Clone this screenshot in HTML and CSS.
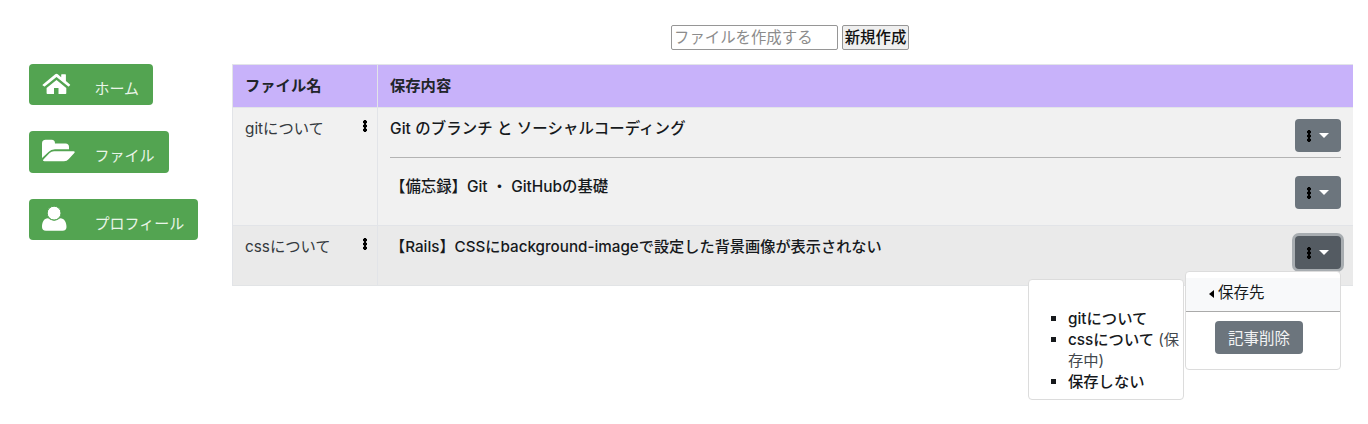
FILE: index.html
```html
<!DOCTYPE html>
<html lang="ja">
<head>
<meta charset="utf-8">
<title>ファイル</title>
<link rel="stylesheet" href="styles.css">
</head>
<body>
<div class="page">
  <nav class="sidebar">
    <a class="nav-btn home"><svg class="nav-icon" viewBox="0 0 34 28"><path d="M14.5 8 4.600 16V21.2Q4.600 22 5.400 22H12V16H16.500V22H23.500Q24.300 22 24.300 21.200V16Z"/><path d="M0.600 12.800 13.200 2.300Q14.500 1.300 15.800 2.300L19.200 5.200V2.800Q19.200 2.200 19.800 2.200H23.300Q23.900 2.200 23.900 2.800V9L28 12.500Q28.400 12.900 28 13.300L27 14.300Q26.500 14.700 26 14.300L14.500 5 3 14.300Q2.500 14.700 2 14.300L.8 13.500Q.3 13.200.6 12.800Z"/></svg><span>ホーム</span></a>
    <a class="nav-btn folder"><svg class="nav-icon" viewBox="0 0 34 28"><path d="M0 19V4.500Q0 .8 3.700.8H9.600Q13 .8 13 4.500H23.500Q27 4.500 27 8V10.300H13Q9 10.300 6.500 12.900Z"/><path d="M1.400 20.600 7.600 14Q9.300 12.200 12 12.200H31.600Q33.600 12.200 32.300 13.900L26.800 20Q24.900 22.200 22 22.200H2.500Q.3 22.200 1.400 20.600Z"/></svg><span>ファイル</span></a>
    <a class="nav-btn user"><svg class="nav-icon" viewBox="0 0 34 28"><path d="M6 11.300Q9 13.700 12.100 13.700T18.200 11.300C22.500 11.300 24.500 15.500 24.500 20Q24.500 23.700 20.500 23.700H4Q0 23.700 0 20C0 15.500 1.700 11.300 6 11.300Z"/><circle class="face" cx="12.100" cy="6.100" r="6.900"/></svg><span>プロフィール</span></a>
  </nav>
  <main class="main">
    <form class="create">
      <input class="create-input" type="text" placeholder="ファイルを作成する">
      <button class="create-btn" type="button">新規作成</button>
    </form>
    <div class="table">
      <div class="cell head">ファイル名</div>
      <div class="cell head">保存内容</div>
      <div class="cell name odd"><span>gitについて</span><i class="dots"></i></div>
      <div class="cell odd">
        <div class="article"><span class="wide first">Git のブランチ と ソーシャルコーディング</span><button class="toggle"><i class="dots"></i><i class="caret"></i></button></div>
        <div class="rule"></div>
        <div class="article second"><span class="wide">【備忘録】Git ・ GitHubの基礎</span><button class="toggle"><i class="dots"></i><i class="caret"></i></button></div>
      </div>
      <div class="cell name even"><span>cssについて</span><i class="dots"></i></div>
      <div class="cell even">
        <div class="article"><span>【Rails】CSSにbackground-imageで設定した背景画像が表示されない</span>
          <div class="dropdown">
            <button class="toggle active"><i class="dots"></i><i class="caret"></i></button>
            <div class="menu">
              <div class="menu-item"><i class="left"></i>保存先</div>
              <button class="delete">記事削除</button>
              <div class="submenu">
                <ul class="list">
                  <li>gitについて</li>
                  <li>cssについて <span class="saved">(保</span><br><span class="saved">存中)</span></li>
                  <li>保存しない</li>
                </ul>
              </div>
            </div>
          </div>
        </div>
      </div>
    </div>
  </main>
</div>
</body>
</html>
```
FILE: styles.css
```css
* { box-sizing: border-box; }
body {
  margin: 0;
  background: #fff;
  color: #212529;
  font: 15.200px/24px Inter, "Noto Sans CJK JP", sans-serif;
}
button, input { font-family: inherit; margin: 0; }
.page { display: flex; height: 424px; overflow: hidden; }
.sidebar {
  width: 232px;
  flex: none;
  padding: 64px 0 0 29px;
  display: flex;
  flex-direction: column;
  align-items: flex-start;
  gap: 26px;
}
.nav-btn {
  display: flex;
  height: 41.300px;
  padding: 8px 0 0 13px;
  border-radius: 4px;
  background: #53a451;
  color: #e9f5e8;
  white-space: nowrap;
}
.nav-btn span { margin: 5px 0 0 18.500px; font-size: 15px; }
.home { width: 124px; }
.folder { width: 139.500px; }
.user { width: 169px; }
.nav-icon { width: 34px; height: 28px; fill: #fff; overflow: visible; }
.face { stroke: #53a451; stroke-width: 1; }
.main { width: 1121px; padding-top: 25px; }
.create { display: flex; gap: 4px; height: 25px; margin: 0 0 14px 439px; }
.create-input {
  width: 167px;
  padding: 0 2px;
  border: 1px solid #969696;
  border-radius: 2px;
  font-size: 15.400px;
}
.create-input::placeholder { color: #8c8c8c; }
.create-btn {
  width: 67px;
  padding: 0;
  border: 1px solid #969696;
  border-radius: 2px;
  background: #efefef;
  color: #111;
  font-size: 15.400px;
  font-weight: 500;
  line-height: 20px;
  white-space: nowrap;
}
.table {
  display: grid;
  grid-template-columns: 145px 976px;
  grid-template-rows: 43px 118px 60px;
  border-right: 1px solid #e2e4e6;
  border-bottom: 1px solid #e2e4e6;
  width: 1121px;
}
.cell {
  padding: 9px 12px 0;
  border-top: 1px solid #e2e4e8;
  border-left: 1px solid #e2e4e8;
  color: #16191c;
  white-space: nowrap;
}
.head { background: #c8b2fa; color: #212529; font-size: 15.300px; font-weight: 700; }
.odd { background: #f1f1f1; }
.even { background: #eaeaea; }
.name { display: flex; justify-content: space-between; padding-right: 10px; color: #34393e; font-size: 15.300px; }
.wide { font-size: 15.400px; }
.first { letter-spacing: 0.120px; }
.dots {
  width: 4px;
  height: 12px;
  flex: none;
  background: radial-gradient(circle at 2px 2px, #000 1.700px, transparent 2.200px) 0 0 / 4px 4px;
}
.name .dots { margin-top: 3px; }
.article { display: flex; justify-content: space-between; height: 40px; font-weight: 500; }
.rule { height: 1px; background: #b3b3b3; }
.second { padding-top: 16px; height: 60px; }
.second > span { padding-top: 1px; }
.toggle {
  display: flex;
  align-items: center;
  gap: 8px;
  width: 46px;
  height: 33px;
  margin-top: 2px;
  padding: 0 0 0 12px;
  border: 0;
  border-radius: 4px;
  background: #6c757d;
}
.caret { border: 5px solid transparent; border-top-color: #fff; border-bottom: 0; }
.active { margin-top: 1px; background: #545b62; box-shadow: 0 0 0 3px #a8adb1; }
.dropdown { position: relative; }
.menu {
  position: absolute;
  top: 36px;
  right: 0;
  width: 156px;
  height: 99px;
  padding-top: 6px;
  border: 1px solid #dcdcdc;
  border-radius: 4px;
  background: #fff;
  font-weight: 400;
}
.menu-item {
  display: flex;
  align-items: center;
  height: 34px;
  padding: 0 0 3px 23px;
  border-bottom: 1px solid #aaa;
  background: #f8f9fa;
  font-size: 15.500px;
}
.left { border: 4px solid transparent; border-right: 5px solid #000; border-left: 0; margin: 2px 4px 0 0; }
.delete {
  display: block;
  width: 88px;
  height: 33px;
  margin: 9px 0 0 29px;
  padding: 0 0 2px;
  border: 0;
  border-radius: 4px;
  background: #6c757d;
  color: #f2f3f4;
  font-size: 15.500px;
}
.submenu {
  position: absolute;
  left: -158px;
  top: 7px;
  width: 156px;
  height: 121px;
  padding-top: 28px;
  border: 1px solid #dcdcdc;
  border-radius: 4px;
  background: #fff;
}
.list { margin: 0; padding: 0 0 0 39px; list-style: square; line-height: 21px; font-weight: 500; font-size: 15.300px; }
.saved { color: #42474c; font-weight: 400; }
```
